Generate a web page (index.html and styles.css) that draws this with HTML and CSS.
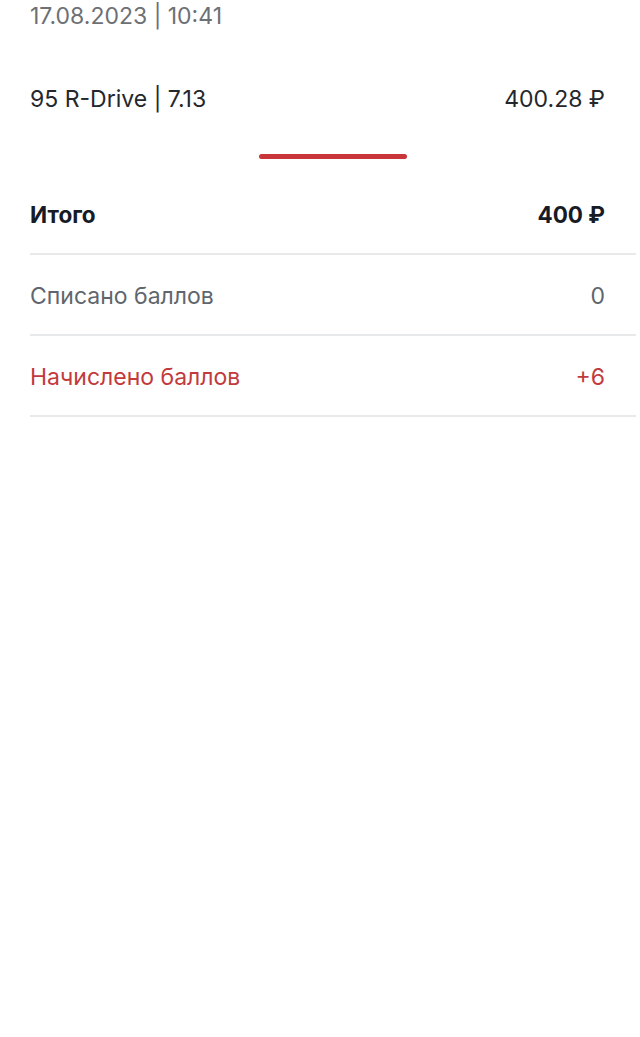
FILE: index.html
```html
<!DOCTYPE html>
<html lang="ru">
<head>
<meta charset="utf-8">
<link rel="stylesheet" href="styles.css">
</head>
<body>
<div class="page">
  <div class="date">17.08.2023 | 10:41</div>
  <div class="line">
    <span>95 R-Drive | 7.13</span>
    <span>400.28 ₽</span>
  </div>
  <div class="bar-wrap"><div class="bar"></div></div>
  <div class="rows">
    <div class="row total"><span>Итого</span><span>400 ₽</span></div>
    <div class="row spent"><span>Списано баллов</span><span>0</span></div>
    <div class="row earned"><span>Начислено баллов</span><span>+6</span></div>
  </div>
</div>
</body>
</html>
```
FILE: styles.css
```css
html, body {
  margin: 0;
  background: #ffffff;
}
body {
  font-family: Inter, "Noto Sans", sans-serif;
  -webkit-font-smoothing: antialiased;
}
.page {
  padding-left: 30px;
  padding-right: 4px;
}
.date {
  font-size: 23px;
  line-height: 32px;
  color: #6d7074;
}
.line {
  display: flex;
  justify-content: space-between;
  padding-right: 31px;
  margin-top: 51px;
  font-size: 23px;
  line-height: 32px;
  color: #24272b;
}
.bar-wrap {
  display: flex;
  justify-content: center;
  margin-top: 39px;
}
.bar {
  width: 148px;
  height: 5px;
  border-radius: 3px;
  background: #c8363a;
}
.rows {
  margin-top: 15px;
}
.row {
  display: flex;
  justify-content: space-between;
  align-items: center;
  box-sizing: border-box;
  height: 81px;
  padding-top: 2px;
  padding-right: 31px;
  border-bottom: 2px solid #e8e9eb;
  font-size: 23px;
}
.row.total {
  padding-top: 1px;
  font-weight: 700;
  color: #161b26;
  font-size: 22.5px;
}
.row.spent {
  color: #5f666d;
}
.row.earned {
  color: #c23a3c;
}
```
